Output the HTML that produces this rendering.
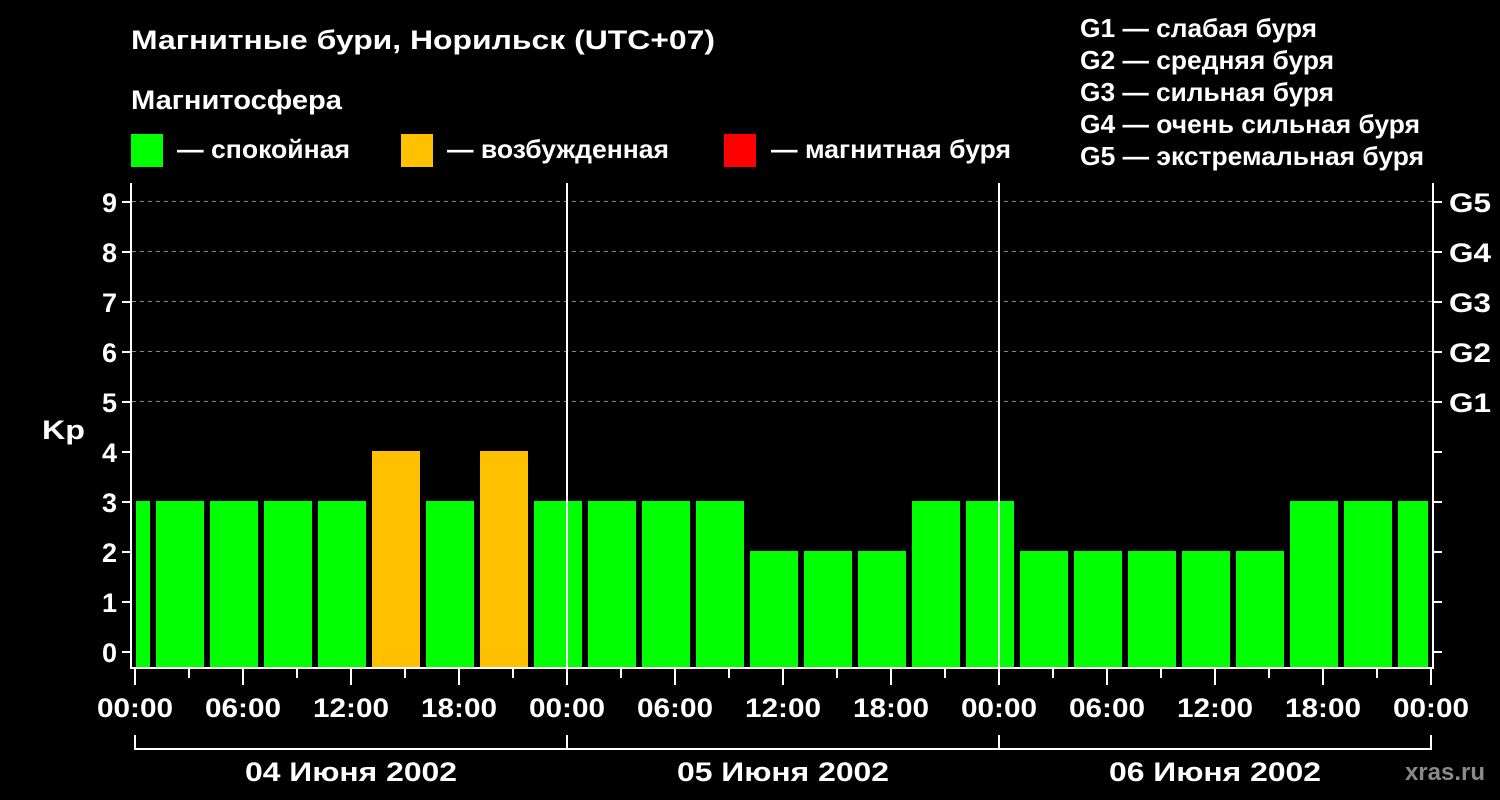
<!DOCTYPE html>
<html><head><meta charset="utf-8"><style>body{margin:0;background:#000;}svg{display:block}text{font-family:"Liberation Sans",sans-serif;font-weight:bold;fill:#fff}</style></head><body>
<svg width="1500" height="800" xmlns="http://www.w3.org/2000/svg">
<rect width="1500" height="800" fill="#000"/>
<g font-size="27">
<text x="131" y="49" textLength="584" lengthAdjust="spacingAndGlyphs">Магнитные бури, Норильск (UTC+07)</text>
<text x="131" y="109" textLength="211" lengthAdjust="spacingAndGlyphs">Магнитосфера</text>
</g>
<rect x="131" y="134" width="32" height="33" fill="#00ff00"/><text x="177" y="158" font-size="26" textLength="173" lengthAdjust="spacingAndGlyphs">— спокойная</text>
<rect x="401" y="134" width="32" height="33" fill="#ffc000"/><text x="447" y="158" font-size="26" textLength="222" lengthAdjust="spacingAndGlyphs">— возбужденная</text>
<rect x="724" y="134" width="32" height="33" fill="#ff0000"/><text x="771" y="158" font-size="26" textLength="240" lengthAdjust="spacingAndGlyphs">— магнитная буря</text>
<g font-size="26"><text x="1080" y="37" textLength="237" lengthAdjust="spacingAndGlyphs">G1 — слабая буря</text><text x="1080" y="69" textLength="254" lengthAdjust="spacingAndGlyphs">G2 — средняя буря</text><text x="1080" y="101" textLength="254" lengthAdjust="spacingAndGlyphs">G3 — сильная буря</text><text x="1080" y="133" textLength="340" lengthAdjust="spacingAndGlyphs">G4 — очень сильная буря</text><text x="1080" y="165" textLength="344" lengthAdjust="spacingAndGlyphs">G5 — экстремальная буря</text></g>
<g stroke="#888" stroke-dasharray="4,4" stroke-width="1"><line x1="132" x2="1432" y1="201.5" y2="201.5"/><line x1="132" x2="1432" y1="251.5" y2="251.5"/><line x1="132" x2="1432" y1="301.5" y2="301.5"/><line x1="132" x2="1432" y1="351.5" y2="351.5"/><line x1="132" x2="1432" y1="401.5" y2="401.5"/></g>
<g id="bars"></g>
<g stroke="#fff" stroke-width="2" fill="none"><polyline points="131,183 131,668 1433,668 1433,183"/><line x1="567" y1="183" x2="567" y2="668"/><line x1="999" y1="183" x2="999" y2="668"/>
<polyline points="135,735 135,749 1431,749 1431,735"/><line x1="567" y1="735" x2="567" y2="749"/><line x1="999" y1="735" x2="999" y2="749"/></g>
<g id="ticks" stroke="#fff" stroke-width="2"></g>
<g font-size="27" text-anchor="end"><text x="117" y="662">0</text><text x="117" y="612">1</text><text x="117" y="562">2</text><text x="117" y="512">3</text><text x="117" y="462">4</text><text x="117" y="412">5</text><text x="117" y="362">6</text><text x="117" y="312">7</text><text x="117" y="262">8</text><text x="117" y="212">9</text></g>
<text x="42" y="439" font-size="27" textLength="43" lengthAdjust="spacingAndGlyphs">Kp</text>
<g font-size="27"><text x="1449" y="212" textLength="42" lengthAdjust="spacingAndGlyphs">G5</text><text x="1449" y="262" textLength="42" lengthAdjust="spacingAndGlyphs">G4</text><text x="1449" y="312" textLength="42" lengthAdjust="spacingAndGlyphs">G3</text><text x="1449" y="362" textLength="42" lengthAdjust="spacingAndGlyphs">G2</text><text x="1449" y="412" textLength="42" lengthAdjust="spacingAndGlyphs">G1</text></g>
<g font-size="27" id="xl"></g>
<g font-size="27"><text x="245" y="781" textLength="212" lengthAdjust="spacingAndGlyphs">04 Июня 2002</text><text x="677" y="781" textLength="212" lengthAdjust="spacingAndGlyphs">05 Июня 2002</text><text x="1109" y="781" textLength="212" lengthAdjust="spacingAndGlyphs">06 Июня 2002</text></g>
<text x="1485" y="780" font-size="24" text-anchor="end" style="fill:#8a8a8a">xras.ru</text>
</svg>
<script>
var ns="http://www.w3.org/2000/svg";
function el(p,t,a,txt){var e=document.createElementNS(ns,t);for(var k in a)e.setAttribute(k,a[k]);if(txt)e.textContent=txt;document.getElementById(p).appendChild(e);}
var v=[3,3,3,3,4,3,4,3,3,3,3,2,2,2,3,3,2,2,2,2,2,3,3,3];
function y(k){return 652-50*k;}
el("bars","rect",{x:136,y:y(3)-1,width:14,height:668-y(3)+1,fill:"#00ff00"});
for(var i=0;i<24;i++){var x=156+54*i,w=48;if(x+w>1428)w=1428-x;el("bars","rect",{x:x,y:y(v[i])-1,width:w,height:668-y(v[i])+1,fill:v[i]>=4?"#ffc000":"#00ff00"});}
for(var k=0;k<=9;k++){el("ticks","line",{x1:122,x2:131,y1:y(k),y2:y(k)});el("ticks","line",{x1:1433,x2:1442,y1:y(k),y2:y(k)});}
var lab=["00:00","06:00","12:00","18:00"];
for(var j=0;j<=24;j++){var x=135+54*j;var maj=j%2==0;el("ticks","line",{x1:x,x2:x,y1:669,y2:maj?685:678});if(maj)el("xl","text",{x:x-38,y:717,textLength:76,lengthAdjust:"spacingAndGlyphs"},lab[(j/2)%4]);}
</script>
</body></html>
